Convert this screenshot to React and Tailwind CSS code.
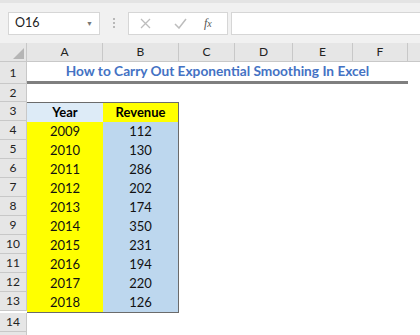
import React from "react";

const cols = [
  { label: "A", w: "w-[76px]" },
  { label: "B", w: "w-[76px]" },
  { label: "C", w: "w-[56px]" },
  { label: "D", w: "w-[58px]" },
  { label: "E", w: "w-[60px]" },
  { label: "F", w: "w-[55px]" },
];

const data = [
  ["2009", 112],
  ["2010", 130],
  ["2011", 286],
  ["2012", 202],
  ["2013", 174],
  ["2014", 350],
  ["2015", 231],
  ["2016", 194],
  ["2017", 220],
  ["2018", 126],
];

const font = { fontFamily: "Lato, 'Liberation Sans', sans-serif" };

const RowHead = ({ n, h = "h-[19px]" }) => (
  <div
    className={`w-[27px] ${h} shrink-0 bg-[#e6e6e6] border-b border-r border-[#c8c8c8] flex items-center justify-center text-[12px] text-[#222]`}
  >
    {n}
  </div>
);

export default function App() {
  return (
    <div className="w-[420px] h-[335px] overflow-hidden bg-white" style={font}>
      {/* toolbar */}
      <div className="h-[43px] bg-[#f1f1f1] border-t-[3px] border-[#e4e4e4] flex items-center">
        <div className="ml-[8px] w-[92px] h-[23px] bg-white border border-[#d6d6d6] flex items-center justify-between pl-[6px] pr-[6px]">
          <span className="text-[12.5px] text-[#222]">O16</span>
          <span className="text-[7px] text-[#777]">▼</span>
        </div>
        <div className="w-[28px] flex flex-col items-center gap-[2px]">
          <span className="w-[2px] h-[2px] bg-[#b8b8b8]" />
          <span className="w-[2px] h-[2px] bg-[#b8b8b8]" />
          <span className="w-[2px] h-[2px] bg-[#b8b8b8]" />
        </div>
        <div className="w-[100px] h-[23px] bg-white border border-[#d6d6d6] flex items-center">
          <svg className="ml-[11px]" width="11" height="11" viewBox="0 0 11 11">
            <path d="M1 1L10 10M10 1L1 10" stroke="#bdbdbd" strokeWidth="1.3" />
          </svg>
          <svg className="ml-[23px]" width="13" height="11" viewBox="0 0 13 11">
            <path d="M1 6L5 10L12 1" stroke="#bdbdbd" strokeWidth="1.5" fill="none" />
          </svg>
          <span
            className="ml-[17px] text-[12px] italic text-[#555]"
            style={{ fontFamily: "'Liberation Serif', serif" }}
          >
            f<span className="text-[10px]">x</span>
          </span>
        </div>
        <div className="ml-[3px] flex-1 h-[23px] bg-white border border-[#d6d6d6] border-r-0" />
      </div>

      {/* column headers */}
      <div className="flex h-[19px] bg-[#e6e6e6] border-b border-[#c8c8c8]">
        <div className="w-[27px] shrink-0 border-r border-[#c8c8c8] relative">
          <svg className="absolute right-[2px] bottom-[2px]" width="11" height="11" viewBox="0 0 11 11">
            <path d="M11 0L11 11L0 11Z" fill="#b5b5b5" />
          </svg>
        </div>
        {cols.map((c) => (
          <div
            key={c.label}
            className={`${c.w} shrink-0 border-r border-[#c8c8c8] flex items-center justify-center text-[12px] text-[#222]`}
          >
            {c.label}
          </div>
        ))}
        <div className="flex-1" />
      </div>

      {/* row 1 */}
      <div className="flex">
        <RowHead n={1} h="h-[22px]" />
        <div className="w-[381px] h-[22px] border-b-[3px] border-[#7f7f7f] flex items-center justify-center">
          <span className="text-[13.7px] font-bold text-[#4472c4]">
            How to Carry Out Exponential Smoothing In Excel
          </span>
        </div>
      </div>

      {/* row 2 */}
      <div className="flex">
        <RowHead n={2} h="h-[18px]" />
      </div>

      {/* table rows */}
      <div className="flex">
        <div className="flex flex-col">
          <RowHead n={3} />
          {data.map((_, i) => (
            <RowHead key={i} n={i + 4} />
          ))}
        </div>
        <div className="flex flex-col w-[152px] border border-l-0 border-[#6b6b6b] self-start">
          <div className="flex h-[19px] text-[13px] font-bold text-black">
            <div className="w-[76px] bg-[#ddebf7] flex items-center justify-center">Year</div>
            <div className="flex-1 bg-[#ffff00] flex items-center justify-center">Revenue</div>
          </div>
          {data.map(([y, r]) => (
            <div key={y} className="flex h-[19px] text-[13px] text-[#111]">
              <div className="w-[76px] bg-[#ffff00] flex items-center justify-center">{y}</div>
              <div className="flex-1 bg-[#bdd7ee] flex items-center justify-center">{r}</div>
            </div>
          ))}
        </div>
      </div>

      {/* rows 14, 15 */}
      <div className="flex">
        <RowHead n={14} h="h-[19px]" />
      </div>
      <div className="flex">
        <RowHead h="h-[19px]" />
      </div>
    </div>
  );
}
